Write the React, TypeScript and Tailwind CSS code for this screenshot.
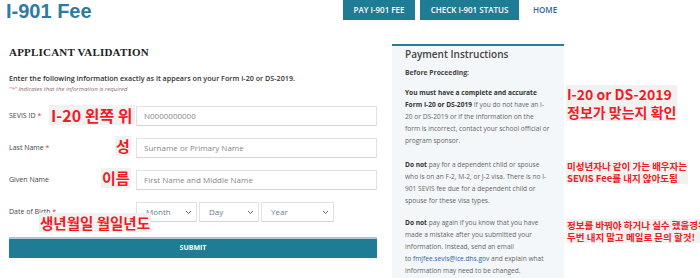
import React from "react";

const Chevron = () => (
  <svg width="7" height="5" viewBox="0 0 7 5" className="text-[#666]">
    <path d="M1 1l2.5 2.5L6 1" fill="none" stroke="currentColor" strokeWidth="1" />
  </svg>
);

function Field({ label, req, placeholder }: { label: string; req?: boolean; placeholder: string }) {
  return (
    <div className="flex h-[20px] items-center">
      <div className="w-[127px] text-[7px] text-[#444]">
        {label}
        {req && <span className="text-[#d33]"> *</span>}
      </div>
      <div className="flex h-[20px] flex-1 items-center border border-[#e2e2e2] border-b-[#d4d4d4] bg-white pl-[7px] text-[8px] text-[#888]">
        {placeholder}
      </div>
    </div>
  );
}

function Select({ label, w }: { label: string; w: string }) {
  return (
    <div className={`flex h-[20px] items-center justify-between border border-[#e2e2e2] border-b-[#d4d4d4] bg-white pl-[9px] pr-[4px] text-[8px] text-[#6a7a90] ${w}`}>
      {label}
      <Chevron />
    </div>
  );
}

function Note({ className, children }: { className: string; children: React.ReactNode }) {
  return (
    <div
      className={`absolute whitespace-nowrap bg-[#f1f1f1] font-bold text-[#ee1c25] ${className}`}
      style={{ fontFamily: '"Noto Sans CJK KR", "Noto Sans", sans-serif' }}
    >
      {children}
    </div>
  );
}

export default function App() {
  return (
    <div
      className="relative h-[278px] w-[700px] overflow-hidden bg-white"
      style={{ fontFamily: '"Open Sans", "Noto Sans", sans-serif' }}
    >
      {/* header */}
      <header className="flex h-[20px] items-start">
        <div className="w-[343px] pl-[6px] pt-[1px] text-[20px] font-bold leading-[20px] text-[#2e7ba0]" style={{ fontFamily: '"Liberation Sans", Arial, sans-serif' }}>
          I-901 Fee
        </div>
        <nav className="flex items-center gap-[5px] text-[8px] font-semibold">
          <span className="flex h-[20px] w-[72px] items-center justify-center bg-[#1f7c95] text-white">PAY I-901 FEE</span>
          <span className="flex h-[20px] w-[99px] items-center justify-center bg-[#1f7c95] text-white">CHECK I-901 STATUS</span>
          <span className="ml-[9px] text-[#2d62a8]">HOME</span>
        </nav>
      </header>

      <div className="flex">
        {/* left column */}
        <section className="w-[377px] pl-[9px] pt-[25px]">
          <h1 className="text-[11px] font-bold leading-[14px] tracking-[0.2px] text-[#222]" style={{ fontFamily: '"Liberation Serif", serif' }}>
            APPLICANT VALIDATION
          </h1>
          <p className="mt-[13px] text-[7.2px] font-semibold leading-[12px] text-[#333]">
            Enter the following information exactly as it appears on your Form I-20 or DS-2019.
          </p>
          <p className="text-[6px] italic leading-[10px] text-[#8a6a6a]">
            <span className="text-[#d55]">"*"</span> Indicates that the information is required
          </p>
          <div className="mt-[12px] flex flex-col gap-[12px]">
            <Field label="SEVIS ID" req placeholder="N0000000000" />
            <Field label="Last Name" req placeholder="Surname or Primary Name" />
            <Field label="Given Name" placeholder="First Name and Middle Name" />
            <div className="flex h-[20px] items-center">
              <div className="w-[127px] text-[7px] text-[#444]">
                Date of Birth <span className="text-[#d33]">*</span>
              </div>
              <div className="flex gap-[2px]">
                <Select label="Month" w="w-[61px]" />
                <Select label="Day" w="w-[60px]" />
                <Select label="Year" w="w-[73px]" />
              </div>
            </div>
          </div>
          <button className="mt-[15px] flex h-[21px] w-full items-center justify-center border-t-2 border-[#a9c9d6] bg-[#1f7c95] text-[7px] font-bold text-white">
            SUBMIT
          </button>
        </section>

        {/* right panel */}
        <aside className="ml-[15px] mt-[24px] h-[260px] w-[172px] whitespace-nowrap border-t-2 border-[#2a7d96] bg-[#f4f7f9] pl-[13px] text-[6.6px] leading-[12px] text-[#666]">
          <h2 className="mt-[1px] text-[10px] font-semibold leading-[14px] text-[#444]">Payment Instructions</h2>
          <p className="mt-[6px] text-[6.8px] font-bold text-[#444]">Before Proceeding:</p>
          <p className="mt-[8px]">
            <b className="text-[#333]">You must have a complete and accurate<br />Form I-20 or DS-2019</b> If you do not have an I-<br />
            20 or DS-2019 or if the information on the<br />
            form is incorrect, contact your school official or<br />
            program sponsor.
          </p>
          <p className="mt-[12px]">
            <b className="text-[#333]">Do not</b> pay for a dependent child or spouse<br />
            who is on an F-2, M-2, or J-2 visa. There is no I-<br />
            901 SEVIS fee due for a dependent child or<br />
            spouse for these visa types.
          </p>
          <p className="mt-[10px]">
            <b className="text-[#333]">Do not</b> pay again if you know that you have<br />
            made a mistake after you submitted your<br />
            information. Instead, send an email<br />
            to <span className="text-[#2d62a8]">fmjfee.sevis@ice.dhs.gov</span> and explain what<br />
            information may need to be changed.
          </p>
        </aside>
      </div>

      {/* annotations */}
      <Note className="left-[49px] top-[105px] h-[20px] px-[2px] text-[16px] leading-[20px]">I-20 왼쪽 위</Note>
      <Note className="left-[115px] top-[136px] h-[20px] px-[1px] text-[15px] leading-[20px]">성</Note>
      <Note className="left-[101px] top-[168px] h-[20px] px-[1px] text-[15px] leading-[20px]">이름</Note>
      <Note className="left-[39px] top-[213px] h-[19px] px-[1px] text-[14.5px] leading-[19px]">생년월일 월일년도</Note>
      <Note className="left-[566px] top-[85px] px-[1px] text-[14px] leading-[18px]">
        I-20 or DS-2019
        <br />
        정보가 맞는지 확인
      </Note>
      <Note className="left-[566px] top-[160px] px-[1px] text-[9.5px] leading-[12px]">
        미성년자나 같이 가는 배우자는
        <br />
        SEVIS Fee를 내지 않아도됨
      </Note>
      <Note className="left-[566px] top-[219px] px-[1px] text-[9.5px] leading-[12px]">
        정보를 바꿔야 하거나 실수 했을경우
        <br />
        두번 내지 말고 메일로 문의 할것!
      </Note>
    </div>
  );
}
